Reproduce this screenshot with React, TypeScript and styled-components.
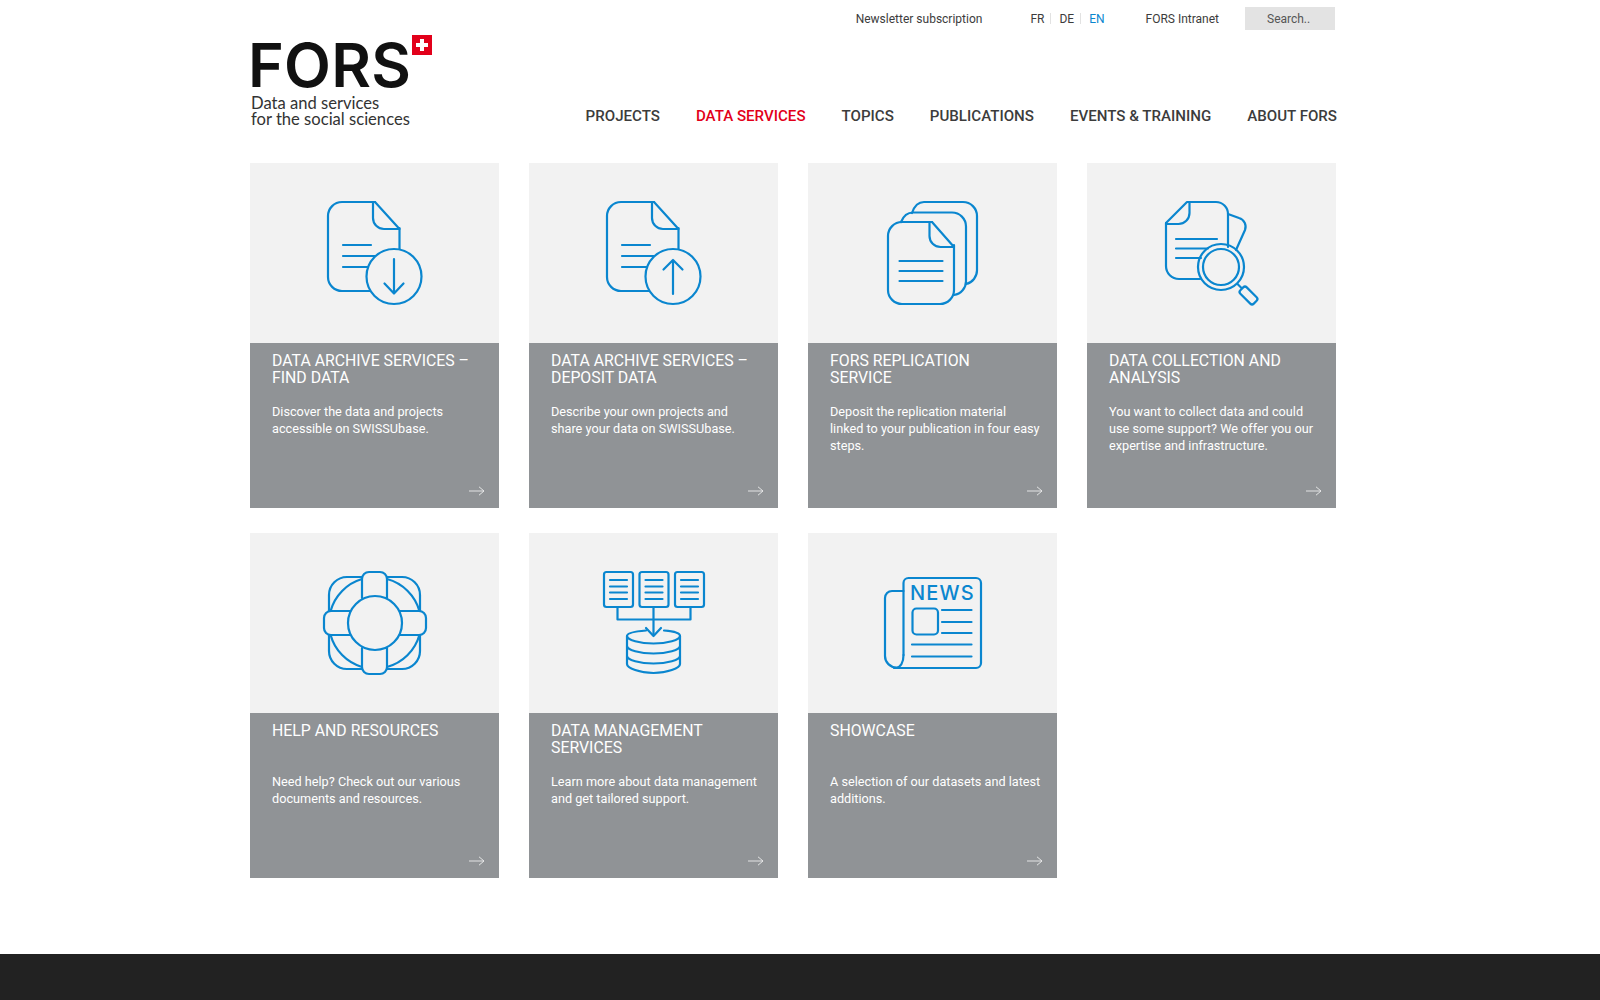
// App.tsx
// FORS data services landing page
import styled, { createGlobalStyle } from "styled-components";
import type { ReactNode } from "react";

const BLUE = "#0a86cf";

const GlobalStyle = createGlobalStyle`
  html, body {
    margin: 0;
    padding: 0;
    background: #fff;
    font-family: Roboto, "Liberation Sans", sans-serif;
    color: #3c3c3c;
  }
  * {
    box-sizing: border-box;
  }
`;

const Wrapper = styled.div`
  width: 1088px;
  margin-left: 250px;
`;

const Header = styled.header`
  height: 163px;
  display: flex;
  justify-content: space-between;
`;

const LogoBox = styled.a`
  width: 182px;
  margin-top: 35px;
  padding-left: 1px;
  display: flex;
  flex-direction: column;
  color: #111;
  text-decoration: none;
`;

const LogoTop = styled.div`
  display: flex;
  align-items: flex-start;
  justify-content: space-between;
  height: 60px;
`;

const LogoWord = styled.span`
  font-family: Inter, "Liberation Sans", sans-serif;
  font-size: 61px;
  line-height: 54px;
  margin: 3px 0 0 -3px;
  letter-spacing: 0.2px;
  font-weight: 600;
  white-space: nowrap;
`;

const LogoSub = styled.span`
  font-family: Lato, "Liberation Sans", sans-serif;
  font-size: 16.6px;
  line-height: 16px;
  color: #333;
  white-space: nowrap;
`;

const HeaderRight = styled.div`
  flex: 1;
  display: flex;
  flex-direction: column;
`;

const TopBar = styled.div`
  height: 23px;
  margin-top: 7px;
  display: flex;
  justify-content: flex-end;
  align-items: center;
  font-size: 12px;
  padding-right: 3px;
`;

const TopLink = styled.a<{ $gap?: number }>`
  color: #3c3c3c;
  text-decoration: none;
  margin-right: ${(p) => p.$gap ?? 0}px;
`;

const Lang = styled.a<{ $active?: boolean }>`
  color: ${(p) => (p.$active ? BLUE : "#3c3c3c")};
  text-decoration: none;
`;

const LangSep = styled.span`
  width: 1px;
  height: 11px;
  margin: 0 8.5px 0 5.5px;
  background: #e2e2e2;
`;

const LangList = styled.div`
  display: flex;
  align-items: center;
  margin-right: 41px;
`;

const SearchBox = styled.input`
  width: 90px;
  height: 23px;
  border: 0;
  background: #e3e3e3;
  padding: 0 0 0 22px;
  font: 12px Roboto, "Liberation Sans", sans-serif;
  &::placeholder {
    color: #555;
    opacity: 1;
  }
`;

const Nav = styled.nav`
  margin-top: 76px;
  display: flex;
  justify-content: flex-end;
  gap: 36px;
  padding-right: 1px;
`;

const NavItem = styled.a<{ $active?: boolean }>`
  font-size: 15.1px;
  line-height: 20px;
  font-weight: 500;
  text-decoration: none;
  color: ${(p) => (p.$active ? "#e2001a" : "#3c3c3c")};
`;

const Grid = styled.main`
  display: grid;
  grid-template-columns: repeat(4, 249px);
  column-gap: 30px;
  row-gap: 25px;
  padding-bottom: 76px;
`;

const Card = styled.a`
  height: 345px;
  display: flex;
  flex-direction: column;
  text-decoration: none;
`;

const CardImage = styled.div`
  height: 180px;
  background: #f2f2f2;
  svg {
    display: block;
  }
`;

const CardBody = styled.div`
  flex: 1;
  background: #909396;
  color: #fff;
  padding: 9px 14px 12px 22px;
  display: flex;
  flex-direction: column;
`;

const CardTitle = styled.h2`
  margin: 0 0 17px;
  min-height: 34px;
  max-width: 204px;
  font-size: 15.84px;
  line-height: 17px;
  font-weight: 400;
  text-transform: uppercase;
`;

const CardText = styled.p`
  margin: 0;
  font-size: 12.7px;
  line-height: 17px;
  white-space: pre;
`;

const CardArrow = styled.svg`
  margin-top: auto;
  align-self: flex-end;
  flex: none;
`;

const Footer = styled.footer`
  height: 46px;
  background: #222;
`;

const Art = styled.svg`
  fill: none;
  stroke: ${BLUE};
  stroke-width: 2.2;
  stroke-linecap: round;
  stroke-linejoin: round;
`;

const NewsWord = styled.text`
  font-family: Inter, "Liberation Sans", sans-serif;
  font-size: 20px;
  font-weight: 500;
  letter-spacing: 1.2px;
  fill: ${BLUE};
  stroke: none;
`;

const IconArt = ({ dx, dy, children }: { dx: number; dy: number; children: ReactNode }) => (
  <Art width="249" height="180" viewBox={`${-dx} ${-dy} 249 180`}>
    {children}
  </Art>
);

const DownIcon = () => (
  <IconArt dx={50} dy={17}>
    <path d="M75 22H42a14 14 0 0 0-14 14v61a14 14 0 0 0 14 14h28" />
    <path d="M99.5 48v21" />
    <path d="M73 22v16a11 11 0 0 0 11 11h15.5L75 22z" />
    <path d="M43 65h28M43 76h32M43 87h25" />
    <circle cx="94" cy="96.5" r="27.5" />
    <path d="M94 79v34M84.5 103.5l9.5 10 9.5-10" />
  </IconArt>
);

const UpIcon = () => (
  <IconArt dx={41} dy={17}>
    <path d="M84 22H51a14 14 0 0 0-14 14v61a14 14 0 0 0 14 14h28" />
    <path d="M108.5 48v21" />
    <path d="M82 22v16a11 11 0 0 0 11 11h15.5L84 22z" />
    <path d="M52 65h28M52 76h32M52 87h25" />
    <circle cx="103" cy="96.5" r="27.5" />
    <path d="M103 114V80M93.5 89.5l9.5-9.5 9.5 9.5" />
  </IconArt>
);

const CopiesIcon = () => (
  <IconArt dx={37} dy={17}>
    <path d="M87 42H57a14 14 0 0 0-14 14v54a14 14 0 0 0 14 14h38a14 14 0 0 0 14-14V65" />
    <path d="M84.5 42v14a11 11 0 0 0 11 11H109L87 42z" />
    <path d="M54.5 81h43M54.5 91h43M54.5 101h43" />
    <path d="M56 42c2-5 6-9.5 12-9.5h39a14 14 0 0 1 14 14V101a14 14 0 0 1-12 14" />
    <path d="M67 33c2-6 6-11 12-11h39a14 14 0 0 1 14 14v54a14 14 0 0 1-11 14" />
  </IconArt>
);

const SearchDocIcon = () => (
  <IconArt dx={33} dy={17}>
    <path d="M46 43v43a13 13 0 0 0 13 13h21" />
    <path d="M46 43l21-21h29a12 12 0 0 1 12 12v33" />
    <path d="M69.5 22v11a11 11 0 0 1-11 11H46" />
    <path d="M56 59h41M56 68.5h32M56 78h25" />
    <path d="M108 34l11 4a9 9 0 0 1 6 12l-9 20" />
    <circle cx="101" cy="87" r="23" />
    <circle cx="101" cy="87" r="18" />
    <path d="M117.5 104l4 4" />
    <rect x="119" y="111" width="19" height="9" rx="2.5" transform="rotate(45 128.5 115.5)" />
  </IconArt>
);

const BuoyIcon = () => (
  <IconArt dx={50} dy={12}>
    <circle cx="75" cy="78" r="27" />
    <path d="M62 53V34a7 7 0 0 1 7-7h11a7 7 0 0 1 7 7v19" />
    <path d="M62 103v19a7 7 0 0 0 7 7h11a7 7 0 0 0 7-7v-19" />
    <path d="M50 66H31a7 7 0 0 0-7 7v10a7 7 0 0 0 7 7h19" />
    <path d="M100 66h19a7 7 0 0 1 7 7v10a7 7 0 0 1-7 7h-19" />
    <path d="M62 32H47a18 18 0 0 0-18 18v16M87 32h15a18 18 0 0 1 18 18v16" />
    <path d="M62 124H47a18 18 0 0 1-18-18V90M87 124h15a18 18 0 0 0 18-18V90" />
    <path d="M62 34A46 46 0 0 0 30.6 66M87 34a46 46 0 0 1 32.4 32" />
    <path d="M62 122A46 46 0 0 1 30.6 90M87 122a46 46 0 0 0 32.4-32" />
  </IconArt>
);

const docXs = [34, 69.5, 105];

const ManagementIcon = () => (
  <IconArt dx={41} dy={12}>
    {docXs.map((x) => (
      <g key={x}>
        <rect x={x} y="27" width="29" height="35" rx="2.5" />
        <path d={`M${x + 6} 35h17M${x + 6} 41.5h17M${x + 6} 47.5h17M${x + 6} 54h17`} />
      </g>
    ))}
    <path d="M47.5 62v12.5h73V62M83.5 62v28" />
    <path d="M76 83l7.5 8 7.5-8" />
    <path d="M76 85.5C64 86.5 57 88 57 91c0 4 13 7.5 26.5 7.5S110 95 110 91c0-3-7-5-16-5.5" />
    <path d="M57 91v28c0 4 13 9 26.5 9s26.5-5 26.5-9V91" />
    <path d="M57 101c0 4 13 7.5 26.5 7.5S110 105 110 101M57 111c0 4 13 7.5 26.5 7.5S110 115 110 111" />
  </IconArt>
);

const NewsIcon = () => (
  <IconArt dx={37} dy={12}>
    <path d="M58.5 110V38a5 5 0 0 1 5-5H131a5 5 0 0 1 5 5v80a5 5 0 0 1-5 5H49" />
    <path d="M58.5 46H47a7 7 0 0 0-7 7v58a11.5 11.5 0 0 0 11.5 11.5c4 0 7-5 7-12.5" />
    <NewsWord x="65" y="55">NEWS</NewsWord>
    <rect x="67.5" y="63.5" width="25.5" height="26" rx="4" />
    <path d="M97 65h29.5M97 77h29.5M97 88h29.5M67 99.5h59.5M67 111.5h59.5" />
  </IconArt>
);

const cards = [
  {
    title: "Data archive services – find data",
    text: "Discover the data and projects\naccessible on SWISSUbase.",
    icon: <DownIcon />,
  },
  {
    title: "Data archive services – deposit data",
    text: "Describe your own projects and\nshare your data on SWISSUbase.",
    icon: <UpIcon />,
  },
  {
    title: "FORS replication service",
    text: "Deposit the replication material\nlinked to your publication in four easy\nsteps.",
    icon: <CopiesIcon />,
  },
  {
    title: "Data collection and analysis",
    text: "You want to collect data and could\nuse some support? We offer you our\nexpertise and infrastructure.",
    icon: <SearchDocIcon />,
  },
  {
    title: "Help and resources",
    text: "Need help? Check out our various\ndocuments and resources.",
    icon: <BuoyIcon />,
  },
  {
    title: "Data management services",
    text: "Learn more about data management\nand get tailored support.",
    icon: <ManagementIcon />,
  },
  {
    title: "Showcase",
    text: "A selection of our datasets and latest\nadditions.",
    icon: <NewsIcon />,
  },
];

const navItems = ["PROJECTS", "DATA SERVICES", "TOPICS", "PUBLICATIONS", "EVENTS & TRAINING", "ABOUT FORS"];

const App = () => {
  return (
    <>
      <GlobalStyle />
      <Wrapper>
        <Header>
          <LogoBox href="#">
            <LogoTop>
              <LogoWord>FORS</LogoWord>
              <svg width="20" height="20" viewBox="0 0 20 20">
                <rect width="20" height="20" fill="#e2001a" />
                <path d="M8 4h4v4h4v4h-4v4H8v-4H4V8h4z" fill="#fff" />
              </svg>
            </LogoTop>
            <LogoSub>
              Data and services
              <br />
              for the social sciences
            </LogoSub>
          </LogoBox>
          <HeaderRight>
            <TopBar>
              <TopLink href="#" $gap={48}>Newsletter subscription</TopLink>
              <LangList>
                <Lang href="#">FR</Lang>
                <LangSep />
                <Lang href="#">DE</Lang>
                <LangSep />
                <Lang href="#" $active>EN</Lang>
              </LangList>
              <TopLink href="#" $gap={26}>FORS Intranet</TopLink>
              <SearchBox placeholder="Search.." />
            </TopBar>
            <Nav>
              {navItems.map((item) => (
                <NavItem key={item} href="#" $active={item === "DATA SERVICES"}>
                  {item}
                </NavItem>
              ))}
            </Nav>
          </HeaderRight>
        </Header>
        <Grid>
          {cards.map((card) => (
            <Card key={card.title} href="#">
              <CardImage>{card.icon}</CardImage>
              <CardBody>
                <CardTitle>{card.title}</CardTitle>
                <CardText>{card.text}</CardText>
                <CardArrow width="16" height="10" viewBox="0 0 16 10" fill="none" stroke="#eceded" strokeWidth="0.9">
                  <path d="M0 5h15M10 .8l5 4.2-5 4.2" />
                </CardArrow>
              </CardBody>
            </Card>
          ))}
        </Grid>
      </Wrapper>
      <Footer />
    </>
  );
};

export default App;
